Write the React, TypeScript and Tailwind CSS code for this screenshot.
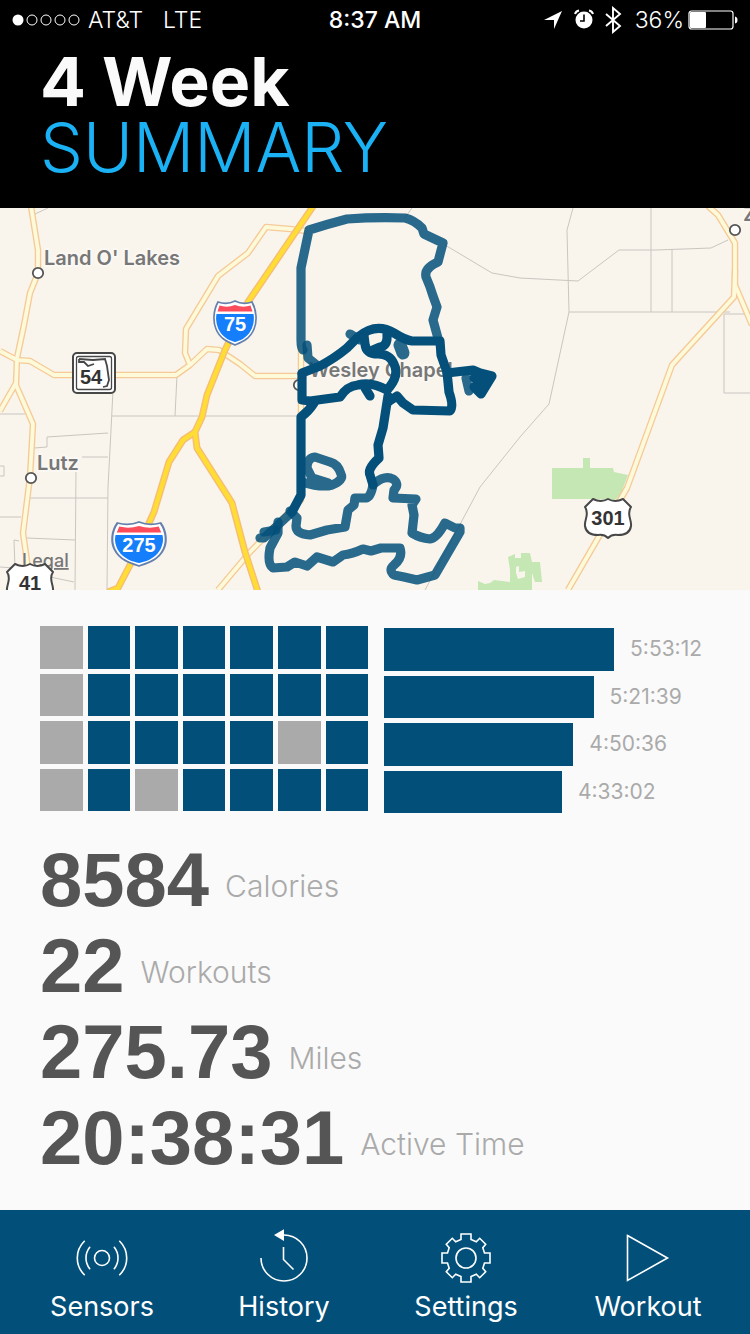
import React from 'react';

interface WeekDTO {
  time: string;
  seconds: number;
  days: boolean[];
}

interface StatDTO {
  value: string;
  label: string;
}

const weeks: WeekDTO[] = [
  {
    time: '5:53:12',
    seconds: 21192,
    days: [false, true, true, true, true, true, true],
  },
  {
    time: '5:21:39',
    seconds: 19299,
    days: [false, true, true, true, true, true, true],
  },
  {
    time: '4:50:36',
    seconds: 17436,
    days: [false, true, true, true, true, false, true],
  },
  {
    time: '4:33:02',
    seconds: 16382,
    days: [false, true, false, true, true, true, true],
  },
];

const stats: StatDTO[] = [
  { value: '8584', label: 'Calories' },
  { value: '22', label: 'Workouts' },
  { value: '275.73', label: 'Miles' },
  { value: '20:38:31', label: 'Active Time' },
];

// seconds that would fill the whole chart width
const CHART_SECONDS = 30040;

const localRoads = [
  'M35 214L48 208',
  'M177 375L175 416',
  'M113 390L111 430L108 487L107 590',
  'M112 416H300',
  'M0 414H25',
  'M34 448L47 447V437L108 433',
  'M82 457H108',
  'M76 470L75 590',
  'M30 498H108',
  'M0 517H21',
  'M27 538L75 540',
  'M19 541L14 540L15 568L0 567',
  'M50 577L74 582',
  'M0 466H4V476H0',
  'M412 208L404 219',
  'M445 245L492 273L520 278L578 281L619 250H656L711 248L728 240',
  'M573 208L567 230L569 312L549 404L520 437L480 487L425 590',
  'M651 208V312',
  'M672 250V312',
  'M569 312H730',
  'M750 314H724V393H750',
];

const mainRoads = [
  'M30 200L38 250V273L30 293L24 325L17 358L16 385L33 424L30 477L23 533L28 568',
  'M16 383L0 411',
  'M0 351L17 360L30 361L54 375H176L190 365L207 349L219 350L240 364L255 376H300',
  'M190 365L185 353L186 329L218 276L248 253L266 227L290 229L307 231',
  'M218 590L250 552L301 500V345',
  'M708 206L718 215L735 243V285L752 325',
  'M735 270L734 297L672 365L627 488L568 590',
];

const highways = [
  'M314 205L248 302L225 350L207 395L202 417L195 432L197 448L232 503L245 552L258 592',
  'M195 432L183 440L169 462L154 512L130 565L118 588L108 592',
];

const lightRoutes = [
  'M303 350Q301 348 301 340V268L309 230Q328 224 347 219Q375 217 405 218Q414 220 422 228L424 234L443 243L438 262Q424 268 426 277Q430 286 433 296L437 307L433 320L439 342',
  'M350 334L360 340',
  'M307 345L308 358L318 366',
  'M466 378L469 391',
  'M292 512L264 538H260',
  'M264 532L276 530',
  'M373 485Q371 497 366 498H355L354 505L348 510L345 527L327 530L310 535Q296 534 296 526L297 518L290 511',
  'M375 483Q385 475 393 479Q400 484 394 490L393 498L416 499L412 505L414 515L412 533Q420 538 430 539Q437 538 445 523L455 528L460 528V532L435 575L417 580L404 577L394 575Q388 570 394 565Q403 558 400 548L381 548L371 551L363 549Q352 554 343 555L333 562L317 557L307 566L295 562L287 567L273 568Q267 564 270 548L278 533V522',
  'M302 482Q322 488 332 485Q344 480 341 474Q338 464 330 462L315 457Q307 458 307 468L312 478L328 483',
];

const darkRoutes = [
  'M302 373L320 366Q335 358 347 348L358 337Q376 322 394 333Q405 340 412 341H440L441 355L447 372L449 392Q454 406 450 411L413 410L403 403L397 396L388 402',
  'M302 374V400L310 401L340 397Q347 386 358 385Q371 381 387 390',
  'M387 390Q400 376 394 364Q390 354 378 354Q366 354 365 344L364 336',
  'M387 334Q388 346 380 347L373 350',
  'M365 388L370 396',
  'M314 403Q309 411 301 417V495L292 512',
  'M388 396L383 428L378 445L379 458Q367 469 370 475L373 485',
  'M447 373L473 370L480 373L492 376L481 394L474 387L485 381L474 378',
];

const InterstateShield: React.FC<{ x: number; y: number; label: string }> = ({
  x,
  y,
  label,
}) => {
  const wide = label.length > 2;

  return (
    <g transform={`translate(${x} ${y})`}>
      <g transform={wide ? 'scale(1.27 1)' : undefined}>
        <path
          d="M-17 -20Q-8 -17 0 -21Q8 -17 17 -20C22 -11 22 0 19 7C15 17 7 20 0 23C-7 20 -15 17 -19 7C-22 0 -22 -11 -17 -20Z"
          fill="#fff"
          stroke="#6680ad"
          strokeWidth="1.7"
        />
        <path
          d="M-18.500 -8H18.500C20 0 17 8 13 12.500C9 17 5 18.500 0 20C-5 18.500 -9 17 -13 12.500C-17 8 -20 0 -18.500 -8Z"
          fill="#157efb"
        />
        <path
          d="M-15.500 -16.500Q-8 -14 0 -17Q8 -14 15.500 -16.500L17.500 -10.500H-17.500Z"
          fill="#fc4c5c"
        />
      </g>
      <text
        y="9"
        textAnchor="middle"
        fill="#fff"
        className="font-['Liberation_Sans',sans-serif] text-[20px] font-bold"
      >
        {label}
      </text>
    </g>
  );
};

const RouteShield: React.FC<{ x: number; y: number; label: string }> = ({
  x,
  y,
  label,
}) => (
  <g transform={`translate(${x} ${y})`}>
    <path
      d="M-15 -20Q-7 -16 0 -20Q7 -16 15 -20L23 -12C18 -5 24 1 23 7C22 14 16 16 10 16Q4 15 0 19Q-4 15 -10 16C-16 16 -22 14 -23 7C-24 1 -18 -5 -23 -12Z"
      fill="#fff"
      stroke="#474747"
      strokeWidth="2"
      strokeLinejoin="round"
    />
    <text
      y="6"
      textAnchor="middle"
      fill="#333"
      className="font-['Liberation_Sans',sans-serif] text-[20px] font-bold"
    >
      {label}
    </text>
  </g>
);

const RouteMap: React.FC = () => (
  <svg
    className="block h-[382px] w-full bg-[#f9f5ed]"
    viewBox="0 208 750 382"
    preserveAspectRatio="xMidYMid slice"
    role="img"
    aria-label="Workout routes"
  >
    <g fill="#c4e7b3">
      <path d="M552 468H583V458H590V468H613L614 472L628 475L620 496L612 502L600 499H552Z" />
      <path d="M478 581L485 584L490 583L494 580L510 582V570L508 557L515 554V558H521V553H530L532 562H540L542 582H535L532 573V590H478ZM516 567V573L518 579L525 577V571L519 572V566Z" />
    </g>
    <g fill="none" stroke="#c9c6c0" strokeWidth="1">
      {localRoads.map(d => (
        <path key={d} d={d} />
      ))}
    </g>
    <g fill="none" strokeLinejoin="round">
      {mainRoads.map(d => (
        <path key={d} d={d} stroke="#f6ca98" strokeWidth="6.500" />
      ))}
      {mainRoads.map(d => (
        <path key={d} d={d} stroke="#fdfada" strokeWidth="3.800" />
      ))}
      {highways.map(d => (
        <path key={d} d={d} stroke="#f6bd78" strokeWidth="7" />
      ))}
      {highways.map(d => (
        <path key={d} d={d} stroke="#ffdd33" strokeWidth="4.200" />
      ))}
    </g>

    <g fill="#fff" stroke="#555" strokeWidth="1.800">
      <circle cx="38" cy="273" r="5.200" />
      <circle cx="31" cy="478" r="5.200" />
      <circle cx="735" cy="230" r="5.200" />
      <circle cx="299" cy="385" r="5.200" />
    </g>
    <g
      fill="#777"
      stroke="#fbf8f3"
      strokeWidth="4"
      strokeLinejoin="round"
      paintOrder="stroke"
      className="font-[Inter,sans-serif] text-[20px] font-semibold"
    >
      <text x="44" y="265">
        Land O&apos; Lakes
      </text>
      <text x="37" y="470">
        Lutz
      </text>
      <text x="309" y="377">
        Wesley Chapel
      </text>
      <text x="743" y="221">
        Z
      </text>
    </g>

    <InterstateShield x={235} y={322} label="75" />
    <InterstateShield x={139} y={543} label="275" />
    <RouteShield x={608} y={519} label="301" />

    <g>
      <rect
        x="73"
        y="353"
        width="42"
        height="40"
        rx="4"
        fill="#fff"
        stroke="#474747"
        strokeWidth="2"
      />
      <rect
        x="76.500"
        y="356.500"
        width="35"
        height="33"
        rx="2"
        fill="none"
        stroke="#474747"
        strokeWidth="1.300"
      />
      <path
        d="M79 359L93 360L105 359L107 366L109 380L107 386L103 387M79 359V362L84 362L88 366L94 364"
        fill="none"
        stroke="#474747"
        strokeWidth="1.800"
      />
      <text
        x="91"
        y="384"
        textAnchor="middle"
        fill="#333"
        className="font-['Liberation_Sans',sans-serif] text-[20px] font-bold"
      >
        54
      </text>
    </g>

    <g
      fill="none"
      stroke="#04507a"
      strokeWidth="9.200"
      strokeLinecap="round"
      strokeLinejoin="round"
    >
      {lightRoutes.map(d => (
        <path key={d} d={d} strokeOpacity="0.850" />
      ))}
      <path d="M400 345L403 353" strokeWidth="13" strokeOpacity="0.850" />
      {darkRoutes.map(d => (
        <path key={d} d={d} />
      ))}
    </g>

    <a href="#legal">
      <text
        x="22"
        y="567"
        fill="#777"
        className="font-[Inter,sans-serif] text-[18px] font-medium underline"
      >
        Legal
      </text>
    </a>
    <RouteShield x={30} y={584} label="41" />
  </svg>
);

const StatusBar: React.FC = () => (
  <div className="grid h-10 grid-cols-3 items-center px-3 font-[Inter,sans-serif] text-[23px] leading-10 text-white">
    <div className="flex items-center font-light">
      <svg width="68" height="12" viewBox="0 0 68 12" aria-hidden="true">
        <circle cx="6" cy="6" r="5.500" fill="#fff" />
        <g fill="none" stroke="#fff" strokeWidth="1">
          <circle cx="20" cy="6" r="5" />
          <circle cx="34" cy="6" r="5" />
          <circle cx="48" cy="6" r="5" />
          <circle cx="62" cy="6" r="5" />
        </g>
      </svg>
      <span className="ml-2">AT&amp;T</span>
      <span className="ml-5">LTE</span>
    </div>
    <div className="text-center font-medium">8:37 AM</div>
    <div className="flex items-center justify-end font-light">
      <svg width="80" height="28" viewBox="0 0 80 28" aria-hidden="true">
        <path d="M1 14L19 5L11 23V14Z" fill="#fff" />
        <circle cx="41" cy="14" r="8.500" fill="#fff" />
        <path
          d="M32 8Q33 5 36 4.500M50 8Q49 5 46 4.500"
          fill="none"
          stroke="#fff"
          strokeWidth="2"
        />
        <path d="M41 8.500V15H37" fill="none" stroke="#000" strokeWidth="1.600" />
        <path
          d="M63 8L77 20L70 26V2L77 8L63 20"
          fill="none"
          stroke="#fff"
          strokeWidth="1.900"
        />
      </svg>
      <span className="ml-3">36%</span>
      <svg
        className="ml-1"
        width="50"
        height="20"
        viewBox="0 0 50 20"
        aria-hidden="true"
      >
        <rect
          x="1"
          y="1"
          width="44"
          height="18"
          rx="2.500"
          fill="none"
          stroke="#fff"
          strokeWidth="1.200"
        />
        <rect x="2" y="2" width="16" height="16" rx="1" fill="#fff" />
        <path d="M47 6.500Q49.500 7 49.500 10Q49.500 13 47 13.500Z" fill="#fff" />
      </svg>
    </div>
  </div>
);

const NavButton: React.FC<{ label: string; children: React.ReactNode }> = ({
  label,
  children,
}) => (
  <button type="button" className="flex flex-col items-center">
    <svg
      width="58"
      height="58"
      viewBox="-29 -29 58 58"
      fill="none"
      stroke="#fff"
      strokeWidth="1.600"
      aria-hidden="true"
    >
      {children}
    </svg>
    <span className="mt-1 text-[27px] leading-8">{label}</span>
  </button>
);

const App: React.FC = () => {
  return (
    <div className="flex min-h-screen flex-col bg-[#fafafa]">
      <header className="h-[208px] bg-black">
        <StatusBar />
        <h1 className="px-10 pt-2 font-[Inter,sans-serif] text-[68px] leading-[66px]">
          <span className="block font-bold text-[#fafafa]">4 Week</span>
          <span className="block font-light text-[#1ab2f5]">SUMMARY</span>
        </h1>
      </header>

      <RouteMap />

      <main className="px-10 pt-9">
        <div className="flex gap-4">
          <div className="grid h-[185px] w-[49%] grid-cols-7 grid-rows-4 gap-[5px]">
            {weeks.map(week =>
              week.days.map((active, day) => (
                <div
                  key={`${week.time}-${day}`}
                  className={active ? 'bg-[#02507a]' : 'bg-[#aaaaaa]'}
                />
              )),
            )}
          </div>
          <div className="mt-0.5 grid h-[185px] flex-1 grid-rows-4 gap-[5px]">
            {weeks.map(week => (
              <div key={week.time} className="flex items-center">
                <div
                  className="h-full shrink-0 bg-[#02507a]"
                  style={{ width: `${(week.seconds / CHART_SECONDS) * 100}%` }}
                />
                <span className="ml-4 font-[Inter,sans-serif] text-[21px] leading-6 text-[#aaaaaa]">
                  {week.time}
                </span>
              </div>
            ))}
          </div>
        </div>

        <dl className="mt-6">
          {stats.map(stat => (
            <div
              key={stat.label}
              className="flex h-[86px] flex-row-reverse items-center justify-end gap-4"
            >
              <dt className="pt-3 font-[Inter,sans-serif] text-[30px] leading-10 font-light text-[#aaaaaa]">
                {stat.label}
              </dt>
              <dd className="font-['Liberation_Sans',Arial,sans-serif] text-[76px] leading-[86px] font-bold text-[#555555]">
                {stat.value}
              </dd>
            </div>
          ))}
        </dl>
      </main>

      <nav className="mt-auto grid h-[124px] grid-cols-4 bg-[#02507a] px-[11px] pt-[19px] font-[Inter,sans-serif] text-white">
        <NavButton label="Sensors">
          <circle r="7.500" />
          <path
            d="M-12.300 -10.700A17.300 17.300 0 0 0 -12.300 10.700M12.300 -10.700A17.300 17.300 0 0 1 12.300 10.700M-17.700 -16.700A23.400 23.400 0 0 0 -17.700 16.700M17.700 -16.700A23.400 23.400 0 0 1 17.700 16.700"
            strokeLinecap="round"
          />
        </NavButton>
        <NavButton label="History">
          <path d="M-23 0A23 23 0 1 0 0 -23M-0.500 -11V1.500L9.500 11.500" />
          <path d="M-10 -23L0 -28.700V-17Z" fill="#fff" stroke="none" />
        </NavButton>
        <NavButton label="Settings">
          <circle r="10" />
          <path d="M-5 -18.500V-24H5V-18.500L10.300 -16.300L13.700 -19.700L19.700 -13.700L16.800 -10.300L18.500 -5H24V5H18.500L16.800 10.300L19.700 13.700L13.700 19.700L10.300 16.300L5 18.500V24H-5V18.500L-10.300 16.300L-13.700 19.700L-19.700 13.700L-16.800 10.300L-18.500 5H-24V-5H-18.500L-16.800 -10.300L-19.700 -13.700L-13.700 -19.700L-10.300 -16.300Z" />
        </NavButton>
        <NavButton label="Workout">
          <path d="M-20.500 -22.500L19.500 0L-20.500 22.500Z" />
        </NavButton>
      </nav>
    </div>
  );
};

export default App;
